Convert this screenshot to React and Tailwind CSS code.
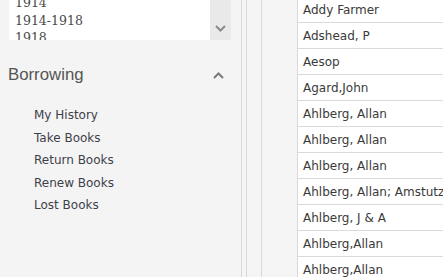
import React from "react";

const years = ["1914", "1914-1918", "1918"];

const menu = ["My History", "Take Books", "Return Books", "Renew Books", "Lost Books"];

const authors = [
  "Addy Farmer",
  "Adshead, P",
  "Aesop",
  "Agard,John",
  "Ahlberg, Allan",
  "Ahlberg, Allan",
  "Ahlberg, Allan",
  "Ahlberg, Allan; Amstutz, Andre",
  "Ahlberg, J & A",
  "Ahlberg,Allan",
  "Ahlberg,Allan",
];

const ChevronDown = () => (
  <svg width="11" height="7" viewBox="0 0 11 7" fill="none">
    <path d="M1 1l4.5 4.5L10 1" stroke="#8a8a8a" strokeWidth="2" />
  </svg>
);

const ChevronUp = () => (
  <svg width="11" height="7" viewBox="0 0 11 7" fill="none">
    <path d="M1 6l4.5-4.5L10 6" stroke="#7a7a7a" strokeWidth="2" />
  </svg>
);

export default function App() {
  return (
    <div className="flex h-[277px] w-[443px] overflow-hidden bg-[#f5f5f5]">
      {/* side panel */}
      <aside className="w-[241px] shrink-0 bg-[#f4f4f4]">
        <div className="ml-[9px] flex h-[40px] w-[222px] overflow-hidden">
          <div className="flex-1 overflow-hidden bg-white pl-[6px]">
            <div className="-mt-[6px] font-['DejaVu_Serif',serif] text-[12.5px] leading-[17.5px] text-[#4a4a4a]">
              {years.map((y) => (
                <div key={y}>{y}</div>
              ))}
            </div>
          </div>
          <div className="flex w-[21px] items-end justify-center bg-[#e9e9e9] pb-[8px]">
            <ChevronDown />
          </div>
        </div>

        <div className="mt-[25px] flex items-center justify-between pl-[8px] pr-[17px]">
          <span className="font-['Liberation_Sans',sans-serif] text-[16.8px] leading-[20px] text-[#555]">
            Borrowing
          </span>
          <ChevronUp />
        </div>

        <ul className="mt-[19px] pl-[34px] font-['DejaVu_Sans',sans-serif] text-[12px] leading-[22.5px] text-[#3f3f4a]">
          {menu.map((m) => (
            <li key={m}>{m}</li>
          ))}
        </ul>
      </aside>

      {/* splitters */}
      <div className="w-[6px] shrink-0 border-x border-[#d9d9d9]" />
      <div className="w-[15px] shrink-0 border-r border-[#d9d9d9]" />
      <div className="w-[36px] shrink-0 border-r border-[#d9d9d9]" />

      {/* grid */}
      <div className="flex-1 overflow-hidden bg-white">
        <div className="-mt-[3px]">
          {authors.map((a, i) => (
            <div
              key={i}
              className="flex h-[26px] items-center whitespace-nowrap border-b border-[#dadada] pl-[5px] font-['DejaVu_Sans',sans-serif] text-[12px] text-[#3a3a3a]"
            >
              {a}
            </div>
          ))}
        </div>
      </div>
    </div>
  );
}
